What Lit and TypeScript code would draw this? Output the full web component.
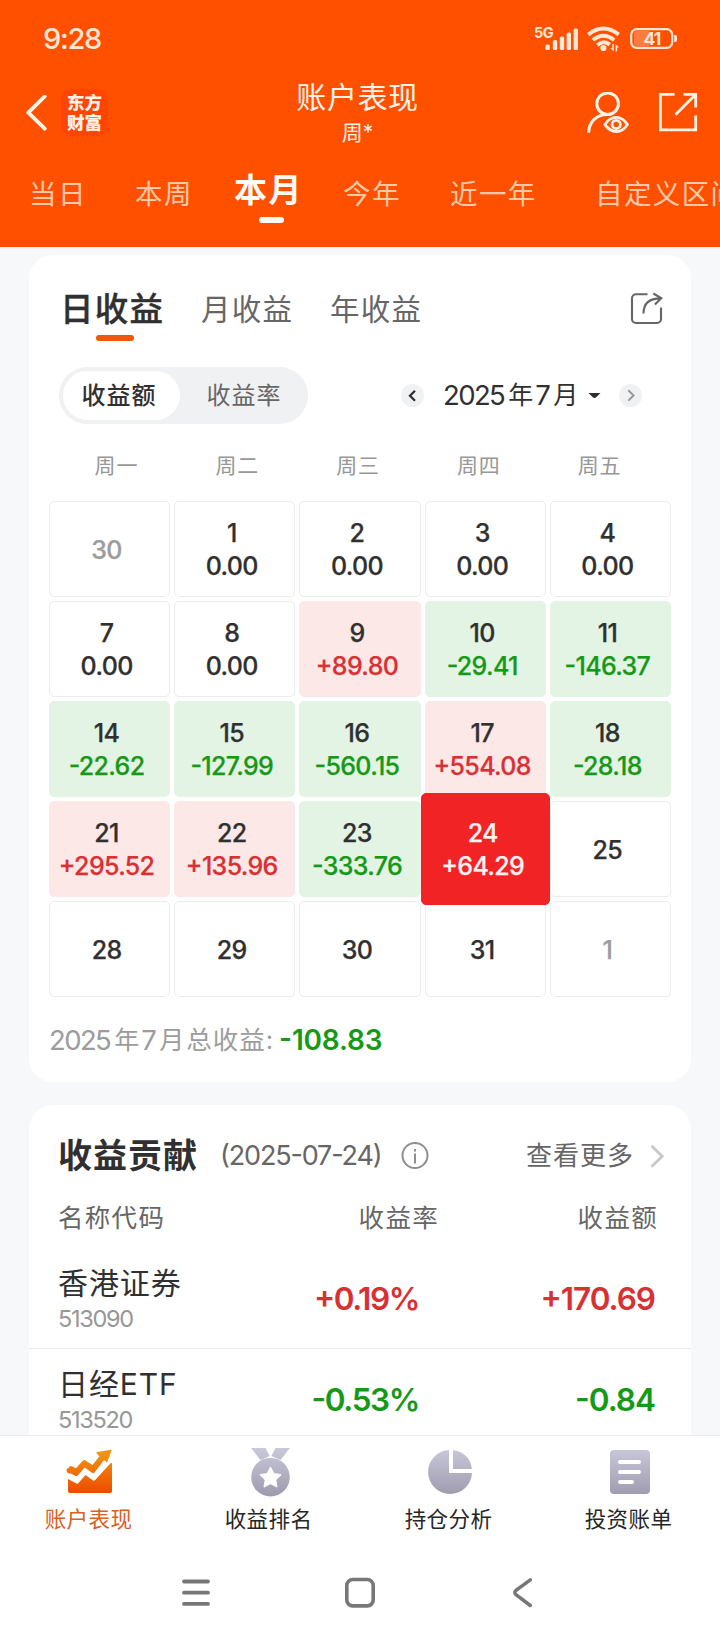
import { LitElement, html, css, svg, nothing } from "lit";
import { customElement, property } from "lit/decorators.js";
import { classMap } from "lit/directives/class-map.js";

interface Day {
  day: number;
  profit?: string;
  muted?: boolean;
  selected?: boolean;
}

interface Holding {
  name: string;
  code: string;
  rate: string;
  amount: string;
}

const DAYS: Day[] = [
  { day: 30, muted: true },
  { day: 1, profit: "0.00" },
  { day: 2, profit: "0.00" },
  { day: 3, profit: "0.00" },
  { day: 4, profit: "0.00" },
  { day: 7, profit: "0.00" },
  { day: 8, profit: "0.00" },
  { day: 9, profit: "+89.80" },
  { day: 10, profit: "-29.41" },
  { day: 11, profit: "-146.37" },
  { day: 14, profit: "-22.62" },
  { day: 15, profit: "-127.99" },
  { day: 16, profit: "-560.15" },
  { day: 17, profit: "+554.08" },
  { day: 18, profit: "-28.18" },
  { day: 21, profit: "+295.52" },
  { day: 22, profit: "+135.96" },
  { day: 23, profit: "-333.76" },
  { day: 24, profit: "+64.29", selected: true },
  { day: 25 },
  { day: 28 },
  { day: 29 },
  { day: 30 },
  { day: 31 },
  { day: 1, muted: true },
];

const HOLDINGS: Holding[] = [
  { name: "香港证券", code: "513090", rate: "+0.19%", amount: "+170.69" },
  { name: "日经ETF", code: "513520", rate: "-0.53%", amount: "-0.84" },
];

const tone = (v?: string) => ({
  up: !!v && v.startsWith("+"),
  down: !!v && v.startsWith("-"),
});

@customElement("status-bar")
class StatusBar extends LitElement {
  static styles = css`
    :host {
      display: flex;
      justify-content: space-between;
      align-items: center;
      height: 78px;
      padding: 0 42px 0 43px;
      color: #ffe6d6;
    }
    .time {
      font-size: 29px;
      font-weight: 500;
      letter-spacing: -1.3px;
      line-height: 78px;
    }
    svg {
      display: block;
    }
    .tiny {
      font-size: 14.5px;
      font-weight: 700;
      letter-spacing: -0.5px;
    }
    .battery {
      font-size: 17.5px;
      font-weight: 700;
      letter-spacing: -0.8px;
    }
  `;
  render() {
    return html`
      <span class="time">9:28</span>
      <svg width="145" height="30" viewBox="533 24 145 30" fill="currentColor">
        <text class="tiny" x="534" y="37.5">5G</text>
        <rect x="545.4" y="44.5" width="4.4" height="5.5" rx="1.5" />
        <rect x="552.8" y="40" width="4.4" height="10" rx="1.5" />
        <rect x="559.8" y="36.5" width="4.4" height="13.5" rx="1.5" />
        <rect x="566.6" y="32.5" width="4.4" height="17.5" rx="1.5" />
        <rect x="573.6" y="28.5" width="4.4" height="21.5" rx="1.5" />
        <g fill="none" stroke="currentColor" stroke-width="3.9">
          <path d="M588.3 34.6Q603.5 22.6 618.7 34.6" />
          <path d="M592.8 40Q603.5 31.4 614.2 40" />
          <path d="M597.2 45.2Q603.5 39.6 609.8 44.6" />
        </g>
        <circle cx="603.4" cy="48" r="3.1" />
        <path d="M613.8 44v7.5l-3.6-3.6h2.1V44zM615.6 51.5V44l3.4 3.6h-1.9v3.9z" />
        <rect x="634" y="31" width="16" height="15" rx="2.5" opacity=".3" />
        <rect x="631.2" y="29.2" width="41" height="18.6" rx="5.5" fill="none" stroke="currentColor" stroke-width="2.2" />
        <path d="M674.2 35h1a1.8 1.8 0 0 1 1.8 1.8v3.4a1.8 1.8 0 0 1-1.8 1.8h-1z" />
        <text class="battery" x="652" y="45" text-anchor="middle">41</text>
      </svg>
    `;
  }
}

@customElement("page-header")
class PageHeader extends LitElement {
  static styles = css`
    :host {
      display: block;
      color: #fff3e9;
    }
    .bar {
      display: grid;
      grid-template-columns: 200px 1fr 200px;
      height: 84px;
    }
    .left {
      display: flex;
      align-items: center;
      padding: 0 0 15px 24px;
      gap: 13px;
    }
    .logo {
      width: 47px;
      height: 47px;
      box-sizing: border-box;
      padding-top: 4px;
      border-radius: 10px;
      background: #ff4404;
      font-size: 17.5px;
      line-height: 20px;
      font-weight: 900;
      text-align: center;
    }
    .title {
      text-align: center;
      padding-right: 5px;
    }
    .name {
      font-size: 30px;
      line-height: 38px;
      letter-spacing: 0.6px;
    }
    .who {
      font-size: 21px;
      line-height: 34px;
    }
    .right {
      display: flex;
      justify-content: flex-end;
      align-items: flex-start;
      gap: 30px;
      padding: 14px 21px 0 0;
    }
    svg {
      display: block;
    }
    .tabs {
      display: grid;
      grid-template-columns: 106px 99px 109px 107px 145px auto;
      align-items: start;
      height: 85px;
      padding-left: 29px;
      overflow: hidden;
      white-space: nowrap;
      color: #ffc9a9;
      font-size: 27.5px;
      letter-spacing: 1.4px;
      line-height: 65px;
    }
    .on {
      width: 69px;
      color: #fffaf4;
      font-size: 33px;
      font-weight: 700;
      line-height: 56px;
    }
    .on::after {
      content: "";
      display: block;
      width: 25px;
      height: 6px;
      border-radius: 3px;
      background: currentColor;
      margin: -1px auto 0 25px;
    }
  `;
  render() {
    return html`
      <div class="bar">
        <div class="left">
          <svg width="24" height="36" fill="none" stroke="currentColor" stroke-width="3.8">
            <path d="M20.7 1.4 4.3 17.7l16.4 16" stroke-linejoin="round" stroke-linecap="round" />
          </svg>
          <div class="logo">东方<br />财富</div>
        </div>
        <div class="title">
          <div class="name">账户表现</div>
          <div class="who">周*</div>
        </div>
        <div class="right">
          <svg width="42" height="42" viewBox="587 92 42 42" fill="none" stroke="currentColor" stroke-width="3">
            <circle cx="607.6" cy="103.7" r="10.8" />
            <path d="M588.6 132.8C589 122 596 114.6 607 114.4" />
            <path d="M604.8 124.4Q609.5 117.3 616.2 117.3T627.4 124.4Q622.8 131.5 616.2 131.5T604.8 124.4z" stroke-width="2.8" />
            <circle cx="616.2" cy="124.4" r="4.1" stroke-width="2.8" />
          </svg>
          <svg width="40" height="40" viewBox="659 92 40 40" fill="none" stroke="currentColor" stroke-width="2.8">
            <path d="M674.5 94.3H660.4V129.8H695.7V115.5" />
            <path d="M683.5 94.3H695.7V107.5M695.3 94.7 675.4 114.8" />
          </svg>
        </div>
      </div>
      <div class="tabs">
        <span>当日</span><span>本周</span><span class="on">本月</span><span>今年</span><span>近一年</span><span>自定义区间</span>
      </div>
    `;
  }
}

@customElement("day-cell")
class DayCell extends LitElement {
  @property({ attribute: false }) data!: Day;
  static styles = css`
    :host {
      display: block;
      height: 96px;
    }
    .cell {
      display: flex;
      flex-direction: column;
      justify-content: center;
      align-items: center;
      box-sizing: border-box;
      height: 96px;
      padding: 2px 6px 0 0;
      border: 1px solid #ebecee;
      border-radius: 5px;
      color: #303030;
      font-size: 25px;
      font-weight: 550;
      letter-spacing: -0.65px;
      line-height: 33px;
      white-space: nowrap;
      font-feature-settings: "case";
      -webkit-text-stroke: 0.25px;
    }
    .up {
      background: #fde8e8;
      border-color: #fde8e8;
    }
    .down {
      background: #e3f4e5;
      border-color: #e3f4e5;
    }
    .up .profit {
      color: #d93033;
    }
    .down .profit {
      color: #169916;
    }
    .muted {
      color: #9c9c9c;
    }
    .selected {
      position: relative;
      z-index: 1;
      height: 112px;
      margin: -8px -4px;
      padding-right: 5px;
      background: #f12325;
      border-color: #f12325;
      color: #fff3f1;
    }
    .selected .profit {
      color: inherit;
    }
  `;
  render() {
    const { day, profit, muted = false, selected = false } = this.data;
    return html`<div class=${classMap({ cell: true, muted, selected, ...tone(profit) })}>
      <span>${day}</span>
      ${profit ? html`<span class="profit">${profit}</span>` : nothing}
    </div>`;
  }
}

@customElement("calendar-card")
class CalendarCard extends LitElement {
  static styles = css`
    :host {
      display: block;
      height: 827px;
      border-radius: 24px;
      background: #fff;
      color: #303030;
    }
    .row {
      display: flex;
      align-items: center;
    }
    .tabs {
      height: 112px;
      box-sizing: border-box;
      padding: 0 27px 4px 29px;
      color: #666;
      font-size: 29.5px;
      letter-spacing: 1.2px;
    }
    .tabs span {
      line-height: 46px;
    }
    .tabs .on {
      display: flex;
      flex-direction: column;
      width: 109px;
      padding-left: 2px;
      margin-right: 32px;
      font-size: 33.5px;
      font-weight: 500;
      color: #303030;
      -webkit-text-stroke: 0.4px;
    }
    .on::after {
      content: "";
      width: 38px;
      height: 6px;
      border-radius: 3px;
      background: #f0560c;
      margin: 3px 0 -9px 36px;
    }
    .year {
      margin: 0 auto 0 37px;
    }
    svg {
      display: block;
    }
    .controls {
      padding: 0 49px 0 30px;
      height: 57px;
    }
    .toggle {
      display: flex;
      flex: none;
      box-sizing: border-box;
      width: 249px;
      height: 57px;
      padding: 4px;
      border-radius: 29px;
      background: #f0f1f3;
      color: #666;
      font-size: 24px;
      letter-spacing: 1px;
      line-height: 50px;
      text-align: center;
      margin-right: 93px;
    }
    .toggle span {
      flex: none;
      box-sizing: border-box;
      width: 117px;
      padding-right: 5px;
      margin-right: 8px;
    }
    .toggle .picked {
      border-radius: 25px;
      background: #fff;
      color: #303030;
      font-weight: 500;
    }
    .arrow {
      flex: none;
      width: 23px;
      height: 23px;
      border-radius: 50%;
      background: #f0f1f3;
    }
    .month {
      flex: 1;
      display: flex;
      align-items: center;
      padding-left: 19px;
      line-height: 57px;
      white-space: nowrap;
    }
    .num {
      letter-spacing: -1.6px;
      font-size: 27.5px;
    }
    .cn {
      padding: 0 2px 0 4px;
      font-size: 25px;
      letter-spacing: 0;
    }
    .caret {
      margin-left: 8px;
    }
    .week {
      display: grid;
      grid-template-columns: repeat(5, 1fr);
      margin: 0 31px 0 27px;
      height: 77px;
      line-height: 83px;
      text-align: center;
      color: #979797;
      font-size: 21px;
      letter-spacing: 0.8px;
    }
    .days {
      display: grid;
      grid-template-columns: repeat(5, 1fr);
      gap: 4px;
      padding: 0 20px;
    }
    .total {
      padding-left: 20px;
      height: 86px;
      line-height: 86px;
      font-size: 25.5px;
      letter-spacing: 1px;
      color: #9c9c9c;
      white-space: nowrap;
    }
    .sum {
      margin-left: 5px;
      color: #169916;
      font-size: 28px;
      font-weight: 600;
      letter-spacing: -0.2px;
      font-feature-settings: "case";
    }
  `;
  render() {
    return html`
      <div class="row tabs">
        <span class="on">日收益</span><span>月收益</span><span class="year">年收益</span>
        <svg width="34" height="34" viewBox="630 292 34 34" fill="none" stroke="#666" stroke-width="2.1">
          <path d="M647.5 294.2H636a4 4 0 0 0-4 4V319a4 4 0 0 0 4 4h21a4 4 0 0 0 4-4V307.5" />
          <path d="M643.5 313.5C643.5 303.5 649 298.4 660.5 298.4M653.3 293.5l8 4.7-6.4 6.4" />
        </svg>
      </div>
      <div class="row controls">
        <div class="toggle"><span class="picked">收益额</span><span>收益率</span></div>
        <svg class="arrow" viewBox="0 0 23 23" fill="none" stroke="#303030" stroke-width="2.3"><path d="m14 6.8-5 5 5 5" /></svg>
        <div class="month">
          <span class="num">2025</span><span class="cn">年</span><span class="num">7</span><span class="cn">月</span>
          <svg class="caret" width="13" height="6"><path d="M.5 0h12L8.2 4.3q-1.7 1.3-3.4 0z" fill="#303030" /></svg>
        </div>
        <svg class="arrow" viewBox="0 0 23 23" fill="none" stroke="#979797" stroke-width="2"><path d="m9.3 6.2 5.2 5.2-5.2 5.2" /></svg>
      </div>
      <div class="week">${["一", "二", "三", "四", "五"].map((d) => html`<span>周${d}</span>`)}</div>
      <div class="days">${DAYS.map((d) => html`<day-cell .data=${d}></day-cell>`)}</div>
      <div class="row total">
        <span class="num">2025</span><span class="cn">年</span><span class="num">7</span><span class="cn">月</span><span>总收益:</span>
        <span class="sum">-108.83</span>
      </div>
    `;
  }
}

@customElement("contribution-card")
class ContributionCard extends LitElement {
  static styles = css`
    :host {
      display: block;
      height: 330px;
      overflow: hidden;
      border-radius: 24px 24px 0 0;
      background: #fff;
      color: #666;
    }
    .head {
      display: flex;
      align-items: center;
      height: 101px;
      line-height: 102px;
      padding: 0 26px 0 29px;
      white-space: nowrap;
    }
    h2 {
      margin: 0;
      width: 162px;
      color: #303030;
      font-size: 34px;
      font-weight: 700;
      letter-spacing: 1px;
    }
    .date {
      width: 181px;
      font-size: 27px;
      letter-spacing: -1.15px;
      font-feature-settings: "case";
    }
    svg {
      display: block;
    }
    .more {
      margin: 0 15px 0 auto;
      font-size: 26px;
      letter-spacing: 1px;
    }
    .cols,
    .item {
      display: grid;
      grid-template-columns: 200px 1fr 1fr;
      padding: 0 33px 0 29px;
    }
    .cols {
      height: 42px;
      line-height: 24px;
      font-size: 25.5px;
      letter-spacing: 1.3px;
    }
    .cols span + span {
      text-align: right;
      padding-right: 19px;
    }
    .cols span:last-child {
      padding-right: 0;
    }
    .item {
      height: 101px;
      box-sizing: border-box;
      align-items: center;
      border-bottom: 1px solid #e9ebee;
    }
    .name {
      color: #303030;
      font-size: 30px;
      letter-spacing: 0.9px;
      line-height: 38px;
    }
    .code {
      font-size: 23.5px;
      line-height: 34px;
      letter-spacing: -1.3px;
      color: #979797;
    }
    .id {
      padding-top: 3px;
    }
    .val {
      text-align: right;
      font-size: 31.5px;
      font-weight: 600;
      letter-spacing: -1px;
      padding: 0 3px 0 0;
      font-feature-settings: "case";
    }
    .val.rate {
      padding-right: 39px;
      letter-spacing: -1.4px;
    }
    .up {
      color: #d93033;
    }
    .down {
      color: #169916;
    }
  `;
  render() {
    return html`
      <div class="head">
        <h2>收益贡献</h2>
        <span class="date">(2025-07-24)</span>
        <svg width="28" height="28" fill="none" stroke="#8f8f8f" stroke-width="2">
          <circle cx="14" cy="13.5" r="12.5" />
          <path d="M14 11.5v10M14 7v2.5" />
        </svg>
        <span class="more">查看更多</span>
        <svg width="16" height="26" fill="none" stroke="#c8c8c8" stroke-width="2.8"><path d="m2.5 2.8 10.7 10.5L2.5 23.8" /></svg>
      </div>
      <div class="cols"><span>名称代码</span><span>收益率</span><span>收益额</span></div>
      ${HOLDINGS.map(
        (h) => html`<div class="item">
          <div class="id">
            <div class="name">${h.name}</div>
            <div class="code">${h.code}</div>
          </div>
          <div class=${classMap({ val: true, rate: true, ...tone(h.rate) })}>${h.rate}</div>
          <div class=${classMap({ val: true, ...tone(h.amount) })}>${h.amount}</div>
        </div>`
      )}
    `;
  }
}

const NAV = [
  {
    label: "账户表现",
    icon: svg`<g fill="url(#hot)"><path d="M3.5 20a3 3 0 0 1 4-1.5l3.5 1.7 7-7.7a1.8 1.8 0 0 1 2.5 0l7 4.5L34.5 8.3 31.8 5.8a1.2 1.2 0 0 1 .6-1.9L45.6 1.8a.8.8 0 0 1 .8 1.1L42 14.5l-3-2.4L29.5 24.500a1.800 1.800 0 0 1-2.500.3l-7.300-5.300-7 8a1.800 1.800 0 0 1-2 .4l-5.500-2.700A2.500 2.500 0 0 1 3.500 20z"/><path d="M3 31l8.500 4.500a1.500 1.500 0 0 0 2-.4l7-8.200 7.200 5.400a1.800 1.800 0 0 0 2.500-.3L45.500 15.200a.9.900 0 0 1 1.500.6V43a2 2 0 0 1-2 2H5a2 2 0 0 1-2-2z"/></g>`,
  },
  {
    label: "收益排名",
    icon: svg`<g fill="url(#cool)"><path d="M6 0h14.5l4.200 8-9.200 4zM45 0H30.500l-4.200 8 9.200 4z"/><circle cx="25.500" cy="29.200" r="19.300"/></g><path d="m25.500 19.500 3.100 6.300 7 1-5.100 4.900 1.200 6.900-6.200-3.200-6.200 3.200 1.200-6.900-5.100-4.900 7-1z" fill="#fff" stroke="#fff" stroke-width="1.500" stroke-linejoin="round"/>`,
  },
  {
    label: "持仓分析",
    icon: svg`<g fill="url(#cool)"><path d="M24 2A22 22 0 1 0 47 25H24z"/><path d="M28 2.200V21h18.800A20 20 0 0 0 28 2.200z"/></g>`,
  },
  {
    label: "投资账单",
    icon: svg`<rect x="5" y="2" width="40" height="44" rx="4" fill="url(#cool)"/><g fill="#fff"><rect x="13" y="12" width="23" height="4" rx="2"/><rect x="13" y="22" width="23" height="4" rx="2"/><rect x="13" y="32" width="16" height="4" rx="2"/></g>`,
  },
];

@customElement("bottom-nav")
class BottomNav extends LitElement {
  static styles = css`
    :host {
      display: block;
      height: 205px;
      box-sizing: border-box;
      border-top: 1px solid #e9ebee;
      background: #fff;
    }
    .tabs {
      display: grid;
      grid-template-columns: repeat(4, 1fr);
      height: 112px;
      padding-top: 12px;
      box-sizing: border-box;
    }
    .tab {
      display: flex;
      flex-direction: column;
      align-items: center;
      color: #262626;
    }
    .tab svg {
      display: block;
    }
    .label {
      padding-right: 3px;
      font-size: 21.5px;
      letter-spacing: 0.4px;
      line-height: 43px;
    }
    .on {
      color: #d9601f;
    }
    .system {
      display: flex;
      justify-content: space-between;
      align-items: center;
      padding: 0 186px 0 181px;
      height: 90px;
    }
    .system svg {
      display: block;
    }
    .home {
      margin-right: 3px;
    }
  `;
  render() {
    return html`
      <div class="tabs">
        ${NAV.map(
          (n, i) => html`<div class=${classMap({ tab: true, on: i === 0 })}>
            <svg width="50" height="50">
              <defs>
                <linearGradient id="hot" gradientUnits="userSpaceOnUse" x1="0" y1="2" x2="0" y2="45">
                  <stop offset="0" stop-color="#f29a13" />
                  <stop offset="1" stop-color="#ee4a00" />
                </linearGradient>
                <linearGradient id="cool" gradientUnits="userSpaceOnUse" x1="0" y1="0" x2="0" y2="48">
                  <stop offset="0" stop-color="#c9c8da" />
                  <stop offset="1" stop-color="#9d9bad" />
                </linearGradient>
              </defs>
              ${n.icon}
            </svg>
            <span class="label">${n.label}</span>
          </div>`
        )}
      </div>
      <div class="system">
        <svg width="30" height="30" stroke="#777" stroke-width="3.8" stroke-linecap="round">
          <path d="M3 3.5h24M3 14.7h24M3 25.9h24" />
        </svg>
        <svg class="home" width="32" height="32" fill="none" stroke="#777" stroke-width="3.6"><rect x="2.8" y="2.5" width="26.4" height="26.4" rx="6" /></svg>
        <svg width="22" height="32" fill="none" stroke="#777" stroke-width="3.5" stroke-linecap="round">
          <path d="M18.3 2.8 4 13.3q-2.3 2.2 0 4.4L18.3 28.5" />
        </svg>
      </div>
    `;
  }
}

@customElement("app-root")
class AppRoot extends LitElement {
  static styles = css`
    :host {
      display: flex;
      flex-direction: column;
      width: 720px;
      height: 1640px;
      overflow: hidden;
      background: #f7f8fa;
      font-family: Inter, "Noto Sans CJK SC", sans-serif;
    }
    .top {
      height: 247px;
      background: #ff5000;
    }
    .body {
      flex: 1;
      display: flex;
      flex-direction: column;
      gap: 23px;
      padding: 8px 29px 0;
    }
  `;
  render() {
    return html`
      <div class="top"><status-bar></status-bar><page-header></page-header></div>
      <div class="body"><calendar-card></calendar-card><contribution-card></contribution-card></div>
      <bottom-nav></bottom-nav>
    `;
  }
}
